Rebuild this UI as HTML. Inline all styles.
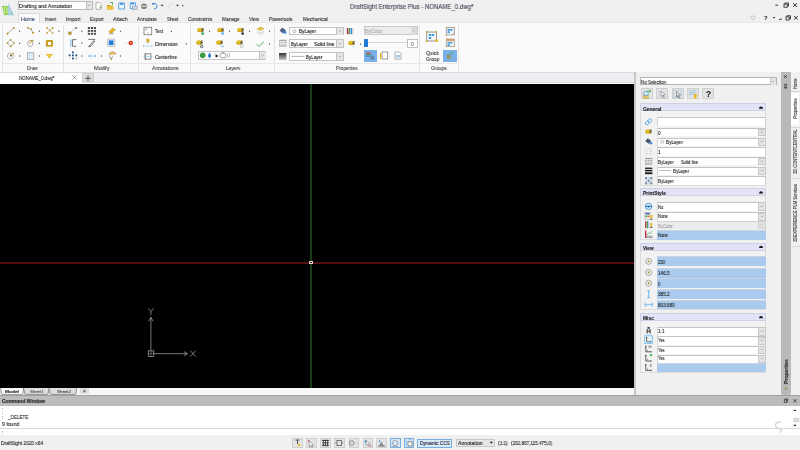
<!DOCTYPE html>
<html><head><meta charset="utf-8">
<style>
*{box-sizing:border-box;margin:0;padding:0}
html,body{width:800px;height:450px;overflow:hidden;background:#efefef;font-family:"Liberation Sans",sans-serif;color:#222}
.a{position:absolute}
.t{position:absolute;white-space:pre;line-height:1;font-size:5px;-webkit-text-stroke-width:0.1px;will-change:transform}
svg{position:absolute;overflow:visible}
</style></head><body>
<div id="root" class="a" style="left:0;top:0;width:800px;height:450px">
<div class="a" style="left:0px;top:0px;width:800px;height:23.5px;background:#f0f0f0;"></div>
<div class="a" style="left:0px;top:22.4px;width:800px;height:49.2px;background:#fafafa;border-top:1px solid #e8e8e8"></div>
<div class="a" style="left:0px;top:71.5px;width:800px;height:1.2px;background:#dadada;"></div>
<div class="a" style="left:0px;top:72.7px;width:634px;height:11.3px;background:#eeeef2;"></div>
<div class="a" style="left:0px;top:82px;width:634px;height:0.9px;background:#dcdcdc;"></div>
<div class="a" style="left:0px;top:82.9px;width:634px;height:1.1px;background:#ffffff;"></div>
<div class="a" style="left:0px;top:72.7px;width:82px;height:10.2px;background:#ffffff;"></div>
<div class="a" style="left:82.2px;top:72.6px;width:11.5px;height:9.8px;background:#dcdcdc;border:0.5px solid #cfcfcf;border-radius:1px"></div>
<div class="a" style="left:0px;top:84px;width:633.6px;height:304px;background:#000;"></div>
<div class="a" style="left:633.6px;top:72px;width:147.6px;height:323.5px;background:#f0f0f0;border-left:2.4px solid #c6c6c6"></div>
<div class="a" style="left:781.2px;top:72px;width:10.2px;height:322.6px;background:#b9b9b9;border-radius:0 0 2px 2px"></div>
<div class="a" style="left:791.4px;top:72px;width:8.6px;height:323.5px;background:#f0f0f0;"></div>
<div class="a" style="left:0px;top:388px;width:633.6px;height:7.5px;background:#f0f0f0;"></div>
<div class="a" style="left:0px;top:395.3px;width:800px;height:11px;background:#bcbcbc;border-top:0.9px solid #a0a0a0"></div>
<div class="a" style="left:0px;top:406.3px;width:800px;height:21.7px;background:#ffffff;"></div>
<div class="a" style="left:0px;top:428px;width:800px;height:1px;background:#d8d8d8;"></div>
<div class="a" style="left:0px;top:429px;width:800px;height:6.4px;background:#ffffff;"></div>
<div class="a" style="left:0px;top:435.4px;width:800px;height:14.6px;background:#f0f0f0;"></div>
<svg style="left:0px;top:0px" width="20" height="20">
 <polygon points="8.2,3.3 13.9,15.2 8.1,15.3" fill="#98c6d2"/>
 <path d="M9.2,9 Q11,9.6 9.8,11.8 Q8.8,13.6 10.6,14.2" fill="none" stroke="#d8f0f8" stroke-width="0.9"/>
 <polygon points="2,5.9 7.6,5.9 7.7,15.1 4.2,15.3" fill="#86cc3a"/>
 <path d="M4,7.6 H5.4 Q7,7.8 6.9,10.8 Q6.8,13.2 5.4,13.4 H4.8 Z" fill="none" stroke="#d8f0c0" stroke-width="0.9"/>
</svg>
<div class="a" style="left:18.2px;top:1.3px;width:74.6px;height:8.4px;background:#fff;border:0.6px solid #bcbcbc"></div>
<div class="a" style="left:86px;top:1.9px;width:6.2px;height:7.2px;background:#e6e6e6;border-left:0.6px solid #b8b8b8"></div>
<svg style="left:0px;top:0px" width="100" height="12"><polyline points="87.8,4.6 89.1,5.9 90.4,4.6" fill="none" stroke="#606060" stroke-width="0.5"/></svg>
<div class="t" style="left:19px;top:4px;font-size:5.6px;color:#1a1a1a;transform:scaleX(0.911);transform-origin:0 0;">Drafting and Annotation</div>
<svg style="left:0px;top:0px" width="200" height="14">
<path d="M96,2.6 H99.3 L101,4.3 V9.2 H96 Z" fill="#fff" stroke="#8a8a8a" stroke-width="0.6"/><path d="M99.6,7.3 h2.2 M100.7,6.2 v2.2" stroke="#58a040" stroke-width="0.6"/>
<path d="M107,5 H109.5 L110.3,5.8 H113 V9.4 H107 Z" fill="#d8a020"/><path d="M107,6.5 H113.5 V9.4 H107Z" fill="#f0c040"/><path d="M110,2.5 L112.5,2.5 L112.5,5" fill="none" stroke="#40a040" stroke-width="0.8"/>
<rect x="118.8" y="3" width="5.6" height="6" fill="#eef6fc" stroke="#3a8ee0" stroke-width="0.75"/><rect x="120" y="3" width="3.2" height="1.8" fill="#3a8ee0"/>
<rect x="130.2" y="2.8" width="5.2" height="5.6" fill="#eef6fc" stroke="#3a8ee0" stroke-width="0.75"/><rect x="131.2" y="2.8" width="2.8" height="1.6" fill="#3a8ee0"/><rect x="132.5" y="6" width="4.8" height="3.6" fill="#c8d8e8" stroke="#7090b0" stroke-width="0.5"/>
<ellipse cx="144" cy="6.2" rx="3" ry="2.8" fill="#808080"/><rect x="141.5" y="5.6" width="5" height="1.4" fill="#d0d0d0"/>
<path d="M153,4 A2.6,2.6 0 1 1 154,8.7" fill="none" stroke="#2a7ad0" stroke-width="0.9"/><path d="M151.8,2.8 L153,5.2 L154.5,3.4Z" fill="#2a7ad0"/>
<path d="M160.6,4.8 H163.6 L162.1,6.4Z" fill="#303030"/>
<path d="M173,4 A2.6,2.6 0 1 0 172,8.7" fill="none" stroke="#dcdcdc" stroke-width="0.9"/>
<path d="M176,4.8 H179 L177.5,6.4Z" fill="#404040"/>
<rect x="182" y="5" width="1.3" height="1.3" fill="#505050"/>
</svg>
<div class="t" style="left:349.8px;top:4px;font-size:6.6px;color:#3c4250;transform:scaleX(0.917);transform-origin:0 0;">DraftSight Enterprise Plus - NONAME_0.dwg*</div>
<svg style="left:0px;top:0px" width="800" height="24">
<rect x="775.3" y="4.7" width="2.7" height="0.9" fill="#202020"/>
<rect x="785" y="3" width="3.4" height="3" fill="none" stroke="#202020" stroke-width="0.8"/><rect x="784" y="4.1" width="3.2" height="3.1" fill="#efefef" stroke="#202020" stroke-width="0.8"/>
<path d="M793.2,3.2 L797,7 M797,3.2 L793.2,7" stroke="#202020" stroke-width="0.9"/>
<path d="M753,20 L751,17.6 A1.2,1.2 0 0 1 753,16.4 A1.2,1.2 0 0 1 755,17.6Z" fill="none" stroke="#b8b8b8" stroke-width="0.7"/>
<path d="M772.6,16.9 H775.4 L774,18.4Z" fill="#303030"/>
<rect x="779" y="18.8" width="3" height="0.9" fill="#303030"/>
<rect x="787" y="15.8" width="3.4" height="3" fill="none" stroke="#202020" stroke-width="0.8"/><rect x="786" y="16.9" width="3.2" height="3.1" fill="#efefef" stroke="#202020" stroke-width="0.8"/>
<path d="M794.1,16 L797.7,19.6 M797.7,16 L794.1,19.6" stroke="#202020" stroke-width="0.9"/>
</svg>
<div class="t" style="left:763.9px;top:16px;font-size:5.8px;color:#303030;font-weight:bold;">?</div>
<div class="a" style="left:17.5px;top:13.1px;width:22.3px;height:10.4px;background:#fafafa;border:0.6px solid #dadada;border-bottom:none;z-index:2"></div>
<div class="t" style="left:21.4px;top:17px;font-size:5.6px;color:#2e4670;transform:scaleX(0.937);transform-origin:0 0;z-index:3">Home</div>
<div class="t" style="left:45px;top:17px;font-size:5.6px;color:#2a2a30;transform:scaleX(0.800);transform-origin:0 0;">Insert</div>
<div class="t" style="left:66.2px;top:17px;font-size:5.6px;color:#2a2a30;transform:scaleX(0.907);transform-origin:0 0;">Import</div>
<div class="t" style="left:90px;top:17px;font-size:5.6px;color:#2a2a30;transform:scaleX(0.840);transform-origin:0 0;">Export</div>
<div class="t" style="left:113px;top:17px;font-size:5.6px;color:#2a2a30;transform:scaleX(0.920);transform-origin:0 0;">Attach</div>
<div class="t" style="left:137.2px;top:17px;font-size:5.6px;color:#2a2a30;transform:scaleX(0.888);transform-origin:0 0;">Annotate</div>
<div class="t" style="left:167px;top:17px;font-size:5.6px;color:#2a2a30;transform:scaleX(0.779);transform-origin:0 0;">Sheet</div>
<div class="t" style="left:188px;top:17px;font-size:5.6px;color:#2a2a30;transform:scaleX(0.862);transform-origin:0 0;">Constraints</div>
<div class="t" style="left:222px;top:17px;font-size:5.6px;color:#2a2a30;transform:scaleX(0.870);transform-origin:0 0;">Manage</div>
<div class="t" style="left:249px;top:17px;font-size:5.6px;color:#2a2a30;transform:scaleX(0.839);transform-origin:0 0;">View</div>
<div class="t" style="left:269px;top:17px;font-size:5.6px;color:#2a2a30;transform:scaleX(0.852);transform-origin:0 0;">Powertools</div>
<div class="t" style="left:302.8px;top:17px;font-size:5.6px;color:#2a2a30;transform:scaleX(0.876);transform-origin:0 0;">Mechanical</div>
<div class="a" style="left:1.5px;top:24.5px;width:0.7px;height:46.5px;background:#e2e2e2;"></div>
<div class="a" style="left:63.3px;top:24.5px;width:0.7px;height:46.5px;background:#e2e2e2;"></div>
<div class="a" style="left:138.2px;top:24.5px;width:0.7px;height:46.5px;background:#e2e2e2;"></div>
<div class="a" style="left:190px;top:24.5px;width:0.7px;height:46.5px;background:#e2e2e2;"></div>
<div class="a" style="left:273.5px;top:24.5px;width:0.7px;height:46.5px;background:#e2e2e2;"></div>
<div class="a" style="left:419.4px;top:24.5px;width:0.7px;height:46.5px;background:#e2e2e2;"></div>
<div class="a" style="left:458.2px;top:24.5px;width:0.7px;height:46.5px;background:#e2e2e2;"></div>
<div class="a" style="left:2px;top:63px;width:456.5px;height:0.7px;background:#e8e8e8;"></div>
<div class="t" style="left:27.25px;top:66px;font-size:5.6px;color:#444;transform:scaleX(0.811);transform-origin:0 0;">Draw</div>
<div class="t" style="left:94px;top:66px;font-size:5.6px;color:#444;transform:scaleX(0.934);transform-origin:0 0;">Modify</div>
<div class="t" style="left:151.9px;top:66px;font-size:5.6px;color:#444;transform:scaleX(0.896);transform-origin:0 0;">Annotations</div>
<div class="t" style="left:225.6px;top:66px;font-size:5.6px;color:#444;transform:scaleX(0.845);transform-origin:0 0;">Layers</div>
<div class="t" style="left:335.6px;top:66px;font-size:5.6px;color:#444;transform:scaleX(0.846);transform-origin:0 0;">Properties</div>
<div class="t" style="left:430.9px;top:66px;font-size:5.6px;color:#444;transform:scaleX(0.860);transform-origin:0 0;">Groups</div>
<svg style="left:0px;top:0px" width="460" height="64"><rect x="19.00" y="30.60" width="1.2" height="1.2" fill="#4a5a70"/><rect x="38.80" y="30.60" width="1.2" height="1.2" fill="#4a5a70"/><rect x="58.30" y="30.60" width="1.2" height="1.2" fill="#4a5a70"/><rect x="19.00" y="42.80" width="1.2" height="1.2" fill="#4a5a70"/><rect x="38.80" y="42.80" width="1.2" height="1.2" fill="#4a5a70"/><rect x="19.00" y="55.40" width="1.2" height="1.2" fill="#4a5a70"/><rect x="38.80" y="55.40" width="1.2" height="1.2" fill="#4a5a70"/><rect x="81.15" y="30.60" width="1.2" height="1.2" fill="#4a5a70"/><rect x="119.90" y="30.60" width="1.2" height="1.2" fill="#4a5a70"/><rect x="81.15" y="42.40" width="1.2" height="1.2" fill="#4a5a70"/><rect x="81.15" y="55.40" width="1.2" height="1.2" fill="#4a5a70"/><rect x="100.90" y="55.40" width="1.2" height="1.2" fill="#4a5a70"/><rect x="119.90" y="55.40" width="1.2" height="1.2" fill="#4a5a70"/><rect x="170.80" y="30.80" width="1.2" height="1.2" fill="#4a5a70"/><rect x="185.70" y="43.20" width="1.2" height="1.2" fill="#4a5a70"/><rect x="208.90" y="30.60" width="1.2" height="1.2" fill="#4a5a70"/><rect x="228.90" y="30.60" width="1.2" height="1.2" fill="#4a5a70"/><rect x="248.90" y="30.60" width="1.2" height="1.2" fill="#4a5a70"/><rect x="268.90" y="30.60" width="1.2" height="1.2" fill="#4a5a70"/><rect x="268.90" y="43.40" width="1.2" height="1.2" fill="#4a5a70"/><rect x="360.00" y="43.60" width="1.2" height="1.2" fill="#4a5a70"/></svg>
<svg style="left:0px;top:0px" width="64" height="64">
 <g fill="#b89a30">
 <line x1="7.5" y1="33.8" x2="13.8" y2="27.8" stroke="#909090" stroke-width="0.7"/>
 <circle cx="7.5" cy="33.6" r="1.1"/><circle cx="13.8" cy="28" r="1.1"/>
 <path d="M27.8,27.8 L31,29 L33,33" fill="none" stroke="#909090" stroke-width="0.7"/>
 <circle cx="27.8" cy="27.8" r="1"/><circle cx="31" cy="29.2" r="0.9"/><circle cx="33" cy="32.8" r="1.1"/>
 <path d="M46.5,27.8 L53,33 M53,27.8 L46.5,33" stroke="#c0b070" stroke-width="0.6" fill="none"/>
 <circle cx="47" cy="28" r="0.9"/><circle cx="52.6" cy="28" r="0.9"/><circle cx="47" cy="32.8" r="0.9"/><circle cx="52.6" cy="32.8" r="0.9"/><circle cx="49.8" cy="30.4" r="0.8"/>
 <path d="M7.3,43 L10.5,39.6 L14,43 L10.8,46.4Z" fill="none" stroke="#909090" stroke-width="0.6"/>
 <circle cx="7.5" cy="43" r="1"/><circle cx="10.5" cy="39.8" r="0.9"/><circle cx="13.8" cy="43" r="0.9"/><circle cx="10.8" cy="46.2" r="1"/>
 <ellipse cx="30.2" cy="43.6" rx="2.7" ry="3" fill="none" stroke="#808080" stroke-width="0.6"/>
 <circle cx="31.5" cy="41" r="0.9"/><circle cx="33" cy="40.5" r="0.8"/><circle cx="30" cy="43" r="0.8"/>
 <rect x="45.8" y="40" width="7.2" height="6.8" rx="1" fill="#c8a028"/>
 <rect x="48" y="42" width="3" height="3" fill="#fff"/>
 <circle cx="10.5" cy="56" r="3.1" fill="none" stroke="#888" stroke-width="0.6"/>
 <circle cx="11" cy="55.6" r="1.1" fill="#706020"/><circle cx="13" cy="53.6" r="0.8"/>
 <rect x="27.3" y="52.8" width="6.6" height="6.5" fill="#d6ecf4" stroke="#8a8a8a" stroke-width="0.6"/>
 <path d="M45.8,54 H53 L49.4,58.6Z" fill="#e0b020"/>
 <path d="M47,54.6 H51.8 L49.4,57.4Z" fill="#f4d040"/>
 </g></svg>
<svg style="left:0px;top:0px" width="140" height="64">
 <rect x="68.8" y="32" width="2.4" height="2.6" fill="#c8a028" stroke="#604010" stroke-width="0.3"/>
 <line x1="71.5" y1="31.5" x2="75" y2="28.5" stroke="#3a9ae0" stroke-width="0.7" stroke-dasharray="1,0.6"/>
 <rect x="75.2" y="27.2" width="2" height="1.8" fill="#808080"/>
 <g fill="#505050">
  <rect x="87.8" y="27" width="2.2" height="2"/><rect x="90.8" y="27" width="2.2" height="2"/><rect x="93.8" y="27" width="2.2" height="2"/>
  <rect x="87.8" y="29.9" width="2.2" height="2"/><rect x="90.8" y="29.9" width="2.2" height="2"/><rect x="93.8" y="29.9" width="2.2" height="2"/>
  <rect x="87.8" y="32.8" width="2.2" height="2"/><rect x="90.8" y="32.8" width="2.2" height="2"/><rect x="93.8" y="32.8" width="2.2" height="2"/>
 </g>
 <path d="M108.6,32 L112.5,28 L115.4,29.6 L111.5,33.5Z" fill="#e8b820" stroke="#a07810" stroke-width="0.4"/>
 <path d="M109,33.8 H114" stroke="#606060" stroke-width="0.5"/>
 <path d="M70,39.5 Q71,39.5 71,41 V45 Q71,46.5 70,46.5" fill="none" stroke="#3a9ae0" stroke-width="0.7"/>
 <path d="M72.5,39.6 H76.3 M72.5,39.6 V46.3 H76.3" fill="none" stroke="#404040" stroke-width="0.7"/>
 <path d="M88.2,39.4 H95 L89,46 M95,41 L90.5,46.5 M88.2,46.5 H91" fill="none" stroke="#404040" stroke-width="0.7"/>
 <rect x="107.3" y="39" width="7.6" height="7.4" rx="0.8" fill="#e8eef4" stroke="#909090" stroke-width="0.5"/>
 <rect x="108.8" y="40.4" width="4.6" height="4.6" fill="#1f7ad8"/>
 <circle cx="130.8" cy="43" r="2.3" fill="#e03020"/>
 <circle cx="130.8" cy="43" r="0.8" fill="#f8d0a0"/>
 <circle cx="126.4" cy="43" r="0.45" fill="#3a9ae0"/><circle cx="135.2" cy="43" r="0.45" fill="#3a9ae0"/>
 <g fill="#1f4f80">
  <rect x="72" y="51.5" width="1.8" height="1.8"/>
  <rect x="68.8" y="54.5" width="1.8" height="1.8"/><rect x="72" y="54.5" width="1.8" height="1.8"/><rect x="75.4" y="54.5" width="1.8" height="1.8"/>
  <rect x="72" y="57.6" width="1.8" height="1.8"/>
 </g>
 <circle cx="76.4" cy="58.5" r="0.9" fill="#b0b0b0"/>
 <circle cx="69.6" cy="58.5" r="0.3" fill="#333"/>
 <path d="M88.6,56 H92 M89.8,54.9 L88.6,56 L89.8,57.1 M96,56 H92.5 M94.8,54.9 L96,56 L94.8,57.1" fill="none" stroke="#3a9ae0" stroke-width="0.6"/>
 <path d="M108.8,55 Q110,51.5 113,51.8 Q116,52 115.8,54.5" fill="#e8c070" stroke="#906030" stroke-width="0.4"/>
 <path d="M109,55.5 L111.2,59.6 L112.5,56" fill="none" stroke="#505050" stroke-width="0.5"/>
 <circle cx="111.4" cy="59.3" r="0.8" fill="#b8a030"/></svg>
<svg style="left:0px;top:0px" width="200" height="64">
 <rect x="144" y="27.2" width="7.8" height="7.6" fill="#fafafa" stroke="#505050" stroke-width="0.6"/>
 <path d="M145.6,29 v1.5 M145.6,29 h2" stroke="#505050" stroke-width="0.4"/>
 <path d="M148,32 v2" stroke="#888" stroke-width="0.4"/>
 <rect x="146.6" y="39" width="2.6" height="3" rx="0.6" fill="#e8b820" stroke="#a08020" stroke-width="0.3"/>
 <path d="M147.9,42 v1.4" stroke="#505050" stroke-width="0.5"/>
 <path d="M143.5,46.2 H152 M143.5,45 v2.4 M152,45 v2.4" stroke="#3a9ae0" stroke-width="0.5" fill="none" stroke-dasharray="0.8,0.4"/>
 <path d="M145.2,53.4 V59.6" stroke="#303030" stroke-width="0.8" fill="none"/>
 <path d="M145.2,53.8 H151 V59.2 H145.2" stroke="#404040" stroke-width="0.6" fill="none"/>
 <path d="M143.4,56.5 H152.4" stroke="#7ac0e8" stroke-width="0.6" fill="none"/></svg>
<div class="t" style="left:154.8px;top:29px;font-size:5.6px;color:#222;transform:scaleX(0.779);transform-origin:0 0;">Text</div>
<div class="t" style="left:154.8px;top:42px;font-size:5.6px;color:#222;transform:scaleX(0.862);transform-origin:0 0;">Dimension</div>
<div class="t" style="left:154.8px;top:55px;font-size:5.6px;color:#222;transform:scaleX(0.862);transform-origin:0 0;">Centerline</div>
<svg style="left:0px;top:0px" width="280" height="64"><defs>
  <g id="lay">
   <ellipse cx="3.3" cy="2.4" rx="3.2" ry="2.2" fill="#e4bc28"/>
   <path d="M0.6,3.4 Q3,5.2 6,3.6" fill="none" stroke="#b08810" stroke-width="0.6"/>
   <path d="M6.6,0.6 L4.6,1.7 L6.8,2.4 L4.6,3.1 L6.6,4.2" fill="none" stroke="#3a3a3a" stroke-width="0.65"/>
  </g>
 </defs>
 <use href="#lay" x="197" y="27.5"/>
 <circle cx="202.6" cy="33.6" r="1.3" fill="#30a040"/>
 <use href="#lay" x="217" y="27.5"/>
 <circle cx="222.6" cy="33.6" r="1.3" fill="#3a9ae0"/><rect x="222.3" y="32.8" width="0.6" height="1.6" fill="#fff"/>
 <use href="#lay" x="237" y="27.5"/>
 <circle cx="242.6" cy="33.6" r="1.3" fill="#303030"/>
 <path d="M257,29 L260.5,27 L264,28.6 L260.5,30.6Z" fill="#e8c830" stroke="#907010" stroke-width="0.3"/>
 <path d="M257,31 L260.5,33 L264,31 M257,32.5 L260.5,34.5 L264,32.5" fill="none" stroke="#c0c0c0" stroke-width="0.6"/>
 <use href="#lay" x="196" y="40"/>
 <circle cx="201.6" cy="46.5" r="1.2" fill="#fff" stroke="#202020" stroke-width="0.7"/>
 <use href="#lay" x="216" y="40"/>
 <path d="M220.5,46.5 h3 M222.5,45.5 l1,1 l-1,1" stroke="#3a9ae0" stroke-width="0.5" fill="none"/>
 <use href="#lay" x="236" y="40"/>
 <rect x="240.5" y="44.6" width="2.6" height="3" fill="#e8e8e8" stroke="#a0a0a0" stroke-width="0.3"/>
 <path d="M256.6,44.2 L259,46.4 L263.8,41.8" fill="none" stroke="#40a850" stroke-width="0.9"/></svg>
<div class="a" style="left:198.2px;top:51.2px;width:68.3px;height:8.4px;background:#fff;border:0.6px solid #c4c4c4"></div>
<div class="a" style="left:259.2px;top:51.8px;width:6.7px;height:7.2px;background:#e6e6e6;border-left:0.6px solid #c0c0c0"></div>
<svg style="left:0px;top:0px" width="280" height="64">
 <polyline points="261.3,55 262.6,56.2 263.9,55" fill="none" stroke="#707070" stroke-width="0.5"/>
 <circle cx="202.7" cy="55.3" r="2.6" fill="#3aa040" stroke="#207020" stroke-width="0.4"/>
 <path d="M209.6,52.6 Q208,54.8 208.1,56.3 A1.5,1.5 0 0 0 211.1,56.3 Q211.2,54.8 209.6,52.6Z" fill="#2a7ad0"/>
 <circle cx="216.6" cy="56" r="1.2" fill="#202020"/><path d="M214.6,53.6 l0.8,0.8 M215.8,53.2 v0.8 M214.2,55 h0.8" stroke="#505050" stroke-width="0.4"/>
 <rect x="220.2" y="53.2" width="5.6" height="4.6" rx="1.6" fill="#fff" stroke="#404040" stroke-width="0.5"/>
 <path d="M222.4,53.2 v-0.6 h1.2 v0.6" fill="none" stroke="#404040" stroke-width="0.4"/>
 <ellipse cx="228.6" cy="55.4" rx="1.1" ry="1.9" fill="none" stroke="#909090" stroke-width="0.6"/>
</svg>
<svg style="left:0px;top:0px" width="420" height="64">
 <path d="M279.5,30.5 L282.5,27.5 L286,30.5 L283,33.5Z" fill="#506080"/>
 <circle cx="285" cy="32.4" r="1.4" fill="#3a8ae0"/>
 <g stroke="#404040" stroke-width="0.55">
  <path d="M279,40.3 H286.5"/><path d="M279,42.2 h1.5 M281.5,42.2 h1.5 M284,42.2 h2.5" /><path d="M279,44.1 h1 M280.8,44.1 h1 M282.6,44.1 h1 M284.4,44.1 h1 M286,44.1 h0.6"/><path d="M279,46 H286.5"/>
 </g>
 <defs><linearGradient id="lw" x1="0" y1="0" x2="0" y2="1"><stop offset="0" stop-color="#303030"/><stop offset="1" stop-color="#c8c8c8"/></linearGradient></defs>
 <rect x="279" y="53" width="7.3" height="7" fill="url(#lw)"/>
 <rect x="346.8" y="28" width="1.6" height="6.2" fill="#b03040"/><rect x="348.8" y="28" width="1.4" height="6.2" fill="#40a050"/><rect x="350.6" y="28" width="1.5" height="6.2" fill="#3a8ae0"/><rect x="352.4" y="28" width="1.2" height="6.2" fill="#d0d0d0"/>
 <use href="#lay" x="348" y="40.5"/>
 <path d="M352.5,46.2 l1,1" stroke="#3a9ae0" stroke-width="0.5"/></svg>
<div class="a" style="left:289.4px;top:26.9px;width:54.4px;height:8.6px;background:#fff;border:0.6px solid #c4c4c4"></div>
<div class="a" style="left:336.3px;top:27.5px;width:6.9px;height:7.4px;background:#e6e6e6;border-left:0.6px solid #c0c0c0"></div>
<div class="a" style="left:289.4px;top:39.4px;width:54.4px;height:8.6px;background:#fff;border:0.6px solid #c4c4c4"></div>
<div class="a" style="left:336.3px;top:40.0px;width:6.9px;height:7.4px;background:#e6e6e6;border-left:0.6px solid #c0c0c0"></div>
<div class="a" style="left:289.4px;top:52.2px;width:54.4px;height:8.6px;background:#fff;border:0.6px solid #c4c4c4"></div>
<div class="a" style="left:336.3px;top:52.800000000000004px;width:6.9px;height:7.4px;background:#e6e6e6;border-left:0.6px solid #c0c0c0"></div>
<svg style="left:0px;top:0px" width="420" height="64">
 <polyline points="338.5,30.6 339.8,31.8 341.1,30.6" fill="none" stroke="#707070" stroke-width="0.5"/>
 <polyline points="338.5,43.1 339.8,44.3 341.1,43.1" fill="none" stroke="#707070" stroke-width="0.5"/>
 <polyline points="338.5,55.9 339.8,57.1 341.1,55.9" fill="none" stroke="#707070" stroke-width="0.5"/>
 <circle cx="294.4" cy="31.2" r="1.5" fill="#fff" stroke="#505050" stroke-width="0.4"/>
 <line x1="291.2" y1="56.4" x2="304.4" y2="56.4" stroke="#404040" stroke-width="0.4"/></svg>
<div class="t" style="left:299px;top:29px;font-size:5.6px;color:#111;transform:scaleX(0.828);transform-origin:0 0;">ByLayer</div>
<div class="t" style="left:290.6px;top:42px;font-size:5.6px;color:#111;transform:scaleX(0.813);transform-origin:0 0;">ByLayer</div>
<div class="t" style="left:313.7px;top:42px;font-size:5.6px;color:#111;transform:scaleX(0.902);transform-origin:0 0;">Solid line</div>
<div class="t" style="left:306px;top:55px;font-size:5.6px;color:#111;transform:scaleX(0.793);transform-origin:0 0;">ByLayer</div>
<div class="a" style="left:363.9px;top:26.2px;width:53.7px;height:9.2px;background:#ececec;border:0.6px solid #c8c8c8"></div>
<div class="a" style="left:410.7px;top:26.8px;width:6.4px;height:8px;background:#dcdcdc;"></div>
<svg style="left:0px;top:0px" width="420" height="64"><polyline points="412.6,30.4 413.9,31.6 415.2,30.4" fill="none" stroke="#a0a0a0" stroke-width="0.5"/></svg>
<div class="t" style="left:364.9px;top:29px;font-size:5.6px;color:#a8a8a8;transform:scaleX(0.874);transform-origin:0 0;">ByColor</div>
<div class="a" style="left:368px;top:42.4px;width:39.5px;height:0.7px;background:#d4d4d4;"></div>
<div class="a" style="left:364px;top:38.8px;width:4px;height:8px;background:#1f7ad8;border-radius:0.5px"></div>
<div class="a" style="left:407.3px;top:38.6px;width:10.3px;height:9.6px;background:#fff;border:0.6px solid #c0c0c0"></div>
<div class="t" style="left:411px;top:42px;font-size:5.0px;color:#444;-webkit-text-stroke-width:0px;transform:scaleX(0.935);transform-origin:0 0;">0</div>
<div class="a" style="left:364px;top:50px;width:12.7px;height:12px;background:#79b0e8;"></div>
<svg style="left:0px;top:0px" width="420" height="64">
 <rect x="366" y="52.5" width="5" height="1.3" fill="#c05050"/><rect x="366" y="54" width="5" height="1.3" fill="#50a060"/><rect x="366" y="55.5" width="5" height="1.3" fill="#5080c0"/>
 <path d="M371,59.5 L372.5,55.5 L374,59.5 M371.6,58 h1.8" stroke="#303030" stroke-width="0.45" fill="none"/>
 <rect x="382" y="52" width="5.8" height="7" fill="#fff" stroke="#505050" stroke-width="0.55"/>
 <rect x="380" y="53" width="1.3" height="5.8" fill="#e8b820"/>
 <path d="M395,52 H399.5 L401,53.5 V59.2 H395Z" fill="#fff" stroke="#606060" stroke-width="0.5"/>
 <rect x="396" y="55" width="4" height="2.6" fill="#a8c8e0"/></svg>
<svg style="left:0px;top:0px" width="460" height="64">
 <rect x="426.8" y="32" width="9.5" height="9" fill="#f4f4f4" stroke="#606060" stroke-width="0.6"/>
 <circle cx="426.8" cy="32" r="0.9" fill="#c8a028"/><circle cx="436.3" cy="32" r="0.9" fill="#c8a028"/><circle cx="426.8" cy="41" r="0.9" fill="#c8a028"/>
 <rect x="428.8" y="34" width="2.4" height="2" fill="#3a9ae0"/><rect x="431.8" y="34" width="2.4" height="2" fill="#3a9ae0"/><rect x="428.8" y="37" width="2.4" height="2" fill="#3a9ae0"/>
 <circle cx="436.5" cy="40.5" r="1.6" fill="#e8b820"/>
 <rect x="446.2" y="27.4" width="8" height="7.6" fill="#f4f4f4" stroke="#606060" stroke-width="0.5"/>
 <circle cx="446.2" cy="27.4" r="0.7" fill="#c8a028"/><circle cx="454.2" cy="27.4" r="0.7" fill="#c8a028"/><circle cx="446.2" cy="35" r="0.7" fill="#c8a028"/>
 <rect x="447.6" y="29" width="2.2" height="1.8" fill="#3a9ae0"/><rect x="450.2" y="29" width="2.2" height="1.8" fill="#3a9ae0"/><rect x="447.6" y="31.3" width="2.2" height="1.8" fill="#3a9ae0"/>
 <path d="M452.6,33.2 l1.4,1.4 M454,33.2 l-1.4,1.4" stroke="#d04040" stroke-width="0.4"/>
 <rect x="446.2" y="39" width="8" height="7.6" fill="#f4f4f4" stroke="#606060" stroke-width="0.5"/>
 <rect x="446.4" y="39.2" width="7.6" height="1.6" fill="#e09040"/>
 <circle cx="446.2" cy="46.6" r="0.7" fill="#c8a028"/><circle cx="454.2" cy="46.6" r="0.7" fill="#c8a028"/>
 <rect x="447.6" y="41.8" width="2.2" height="1.8" fill="#3a9ae0"/><rect x="450.2" y="41.8" width="2.2" height="1.8" fill="#3a9ae0"/><rect x="447.6" y="44" width="2.2" height="1.8" fill="#3a9ae0"/></svg>
<div class="a" style="left:443px;top:50px;width:13.5px;height:12px;background:#79b0e8;"></div>
<svg style="left:0px;top:0px" width="460" height="64">
 <rect x="447" y="55" width="3.6" height="3.6" fill="#a0a060" stroke="#707040" stroke-width="0.3"/>
 <path d="M449.5,55 Q450,52.5 452.5,52.5" fill="none" stroke="#40a050" stroke-width="0.6"/>
 <path d="M451.8,51.6 L453.2,52.5 L451.8,53.4Z" fill="#40a050"/></svg>
<div class="t" style="left:425.8px;top:51px;font-size:5.6px;color:#333;transform:scaleX(0.894);transform-origin:0 0;">Quick</div>
<div class="t" style="left:425.6px;top:57px;font-size:5.6px;color:#333;transform:scaleX(0.848);transform-origin:0 0;">Group</div>
<div class="t" style="left:18.7px;top:76px;font-size:5.6px;color:#222;transform:scaleX(0.794);transform-origin:0 0;">NONAME_0.dwg*</div>
<svg style="left:0px;top:0px" width="100" height="90"><path d="M72.2,75.2 L76.6,79.6 M76.6,75.2 L72.2,79.6" stroke="#505050" stroke-width="0.5"/>
<path d="M88,75.4 V81.2 M85.1,78.3 H90.9" stroke="#404040" stroke-width="0.8"/></svg>
<div class="a" style="left:310px;top:84px;width:2px;height:304px;background:#173c17;"></div>
<div class="a" style="left:0px;top:262px;width:633.6px;height:2px;background:#520f0f;"></div>
<div class="a" style="left:308.9px;top:260.8px;width:4.3px;height:3.4px;background:#2a1a10;border:0.7px solid #e8d8d8;border-radius:0.6px"></div>
<svg style="left:0px;top:0px" width="800" height="450">
<g stroke="#c8c8c8" stroke-width="0.6" fill="none">
<path d="M150.9,317.3 V350.7"/>
<path d="M148.7,321.3 L150.9,317.3 L153.1,321.3"/>
<path d="M148.2,308.3 L150.9,311.6 L153.6,308.3 M150.9,311.6 V315.3"/>
<rect x="148.2" y="350.9" width="5.6" height="5.6"/><path d="M151,350.9 v5.6 M148.2,353.7 h5.6" stroke-width="0.4"/>
<path d="M153.8,353.7 H187.3"/>
<path d="M183.8,351.5 L187.3,353.7 L183.8,355.9"/>
<path d="M190.2,350.6 L195.8,356.6 M195.8,350.6 L190.2,356.6"/>
</g></svg>
<div class="a" style="left:640.2px;top:77.2px;width:136.5px;height:8.3px;background:#fff;border:0.6px solid #b4b4b4"></div>
<div class="a" style="left:769.8px;top:77.8px;width:6.4px;height:7.1px;background:#e6e6e6;border-left:0.6px solid #c8c8c8"></div>
<svg style="left:0px;top:0px" width="800" height="450"><polyline points="771.7,80.8 773,82 774.3,80.8" fill="none" stroke="#808080" stroke-width="0.5"/></svg>
<div class="t" style="left:640.9px;top:81px;font-size:4.7px;color:#222;transform:scaleX(0.946);transform-origin:0 0;">No Selection</div>
<div class="a" style="left:641px;top:88.2px;width:11.799999999999955px;height:11.3px;background:#e2e2e2;border:0.6px solid #cfcfcf"></div>
<div class="a" style="left:656.2px;top:88.2px;width:11.799999999999955px;height:11.3px;background:#e2e2e2;border:0.6px solid #cfcfcf"></div>
<div class="a" style="left:671.5px;top:88.2px;width:12.0px;height:11.3px;background:#e2e2e2;border:0.6px solid #cfcfcf"></div>
<div class="a" style="left:687px;top:88.2px;width:11.799999999999955px;height:11.3px;background:#e2e2e2;border:0.6px solid #cfcfcf"></div>
<div class="a" style="left:702.2px;top:88.2px;width:12.299999999999955px;height:11.3px;background:#e2e2e2;border:0.6px solid #cfcfcf"></div>
<svg style="left:0px;top:0px" width="800" height="450">
<rect x="643.2" y="95.2" width="5" height="3.2" fill="#e8c860" stroke="#c09830" stroke-width="0.4"/>
<circle cx="646" cy="93.6" r="2.3" fill="#d8ecf8" fill-opacity="0.5" stroke="#3a9ae0" stroke-width="0.7"/>
<path d="M646.5,91.6 Q648.5,90.4 650,91.2" fill="none" stroke="#40b050" stroke-width="0.8"/>
<path d="M649.4,89.6 L651.4,91.4 L648.8,92.4Z" fill="#40b050"/>
<path d="M659,90.5 v6 M658.2,91.5 h1.6" stroke="#a8c8e8" stroke-width="0.5"/>
<path d="M661,91 L665.2,94.6 L663.2,94.9 L664.3,97.3 L663.4,97.7 L662.3,95.3 L661,96.6Z" fill="#fff" stroke="#404040" stroke-width="0.45"/>
<rect x="673.6" y="90.4" width="7.6" height="7" fill="none" stroke="#5aa8e8" stroke-width="0.5" stroke-dasharray="0.9,0.7"/>
<path d="M676.5,91.6 L680.5,95 L678.6,95.3 L679.6,97.6 L678.8,98 L677.8,95.7 L676.5,97Z" fill="#e8e8e8" stroke="#303030" stroke-width="0.45"/>
<path d="M689,90.8 h2 M691.6,90.8 h4 M689,92.6 h2 M691.6,92.6 h4 M689,94.4 h2 M691.6,94.4 h3" stroke="#5aa8e8" stroke-width="0.55"/>
<path d="M694,94 h2.4 l0.8,1.4 l-0.8,1.4 v1.6 h-2.4z" fill="#e8b820"/>
</svg>
<div class="t" style="left:706.2px;top:90px;font-size:8.4px;color:#202020;font-weight:bold;">?</div>
<div class="a" style="left:640.4px;top:103.4px;width:125.3px;height:82.6px;background:#f2f2f2;border:0.6px solid #dcdcdc"></div>
<div class="a" style="left:640.4px;top:103.4px;width:125.3px;height:8.099999999999994px;background:#e3e3f8;border:0.6px solid #cfd0e4"></div>
<div class="t" style="left:643px;top:108px;font-size:4.7px;color:#1a1a1a;font-weight:bold;transform:scaleX(1.051);transform-origin:0 0;">General</div>
<svg style="left:0px;top:0px" width="800" height="450"><path d="M758.9,108.75 L759.6,107.15 Q761,105.85 762.4,107.15 L763.1,108.75Z" fill="#151515"/></svg>
<div class="a" style="left:657.2px;top:117.3px;width:108.5px;height:9.200000000000003px;background:#fff;border-top:0.8px solid #c4c4c4;border-left:0.6px solid #d4d4d4;border-right:0.7px solid #cfcfcf"></div>
<div class="a" style="left:657.2px;top:128.2px;width:108.5px;height:8.0px;background:#fff;border-top:0.8px solid #c4c4c4;border-left:0.6px solid #d4d4d4"></div>
<div class="a" style="left:758.4px;top:128.6px;width:7.3px;height:7.6px;background:#e4e4e4;border:0.6px solid #c8c8c8"></div>
<svg style="left:0px;top:0px" width="800" height="450"><polyline points="760.7,131.50 762,132.70 763.3,131.50" fill="none" stroke="#808080" stroke-width="0.5"/></svg>
<div class="t" style="left:658px;top:132px;font-size:4.7px;color:#222;">0</div>
<div class="a" style="left:657.2px;top:137.7px;width:108.5px;height:8.100000000000023px;background:#fff;border-top:0.8px solid #c4c4c4;border-left:0.6px solid #d4d4d4"></div>
<div class="a" style="left:758.4px;top:138.1px;width:7.3px;height:7.700000000000022px;background:#e4e4e4;border:0.6px solid #c8c8c8"></div>
<svg style="left:0px;top:0px" width="800" height="450"><polyline points="760.7,141.05 762,142.25 763.3,141.05" fill="none" stroke="#808080" stroke-width="0.5"/></svg>
<svg style="left:0px;top:0px" width="800" height="450"><circle cx="662.2" cy="141.8" r="1.5" fill="#fff" stroke="#606060" stroke-width="0.4"/></svg>
<div class="t" style="left:665.7px;top:141px;font-size:4.7px;color:#222;transform:scaleX(0.974);transform-origin:0 0;">ByLayer</div>
<div class="a" style="left:657.2px;top:147px;width:108.5px;height:9.199999999999989px;background:#fff;border-top:0.8px solid #c4c4c4;border-left:0.6px solid #d4d4d4;border-right:0.7px solid #cfcfcf"></div>
<div class="t" style="left:658px;top:151px;font-size:4.7px;color:#222;">1</div>
<div class="a" style="left:657.2px;top:157.4px;width:108.5px;height:8.0px;background:#fff;border-top:0.8px solid #c4c4c4;border-left:0.6px solid #d4d4d4"></div>
<div class="a" style="left:758.4px;top:157.8px;width:7.3px;height:7.6px;background:#e4e4e4;border:0.6px solid #c8c8c8"></div>
<svg style="left:0px;top:0px" width="800" height="450"><polyline points="760.7,160.70 762,161.90 763.3,160.70" fill="none" stroke="#808080" stroke-width="0.5"/></svg>
<div class="t" style="left:658px;top:161px;font-size:4.7px;color:#222;transform:scaleX(0.905);transform-origin:0 0;">ByLayer</div>
<div class="t" style="left:680.7px;top:161px;font-size:4.7px;color:#222;transform:scaleX(0.891);transform-origin:0 0;">Solid line</div>
<div class="a" style="left:657.2px;top:166.6px;width:108.5px;height:8.099999999999994px;background:#fff;border-top:0.8px solid #c4c4c4;border-left:0.6px solid #d4d4d4"></div>
<div class="a" style="left:758.4px;top:167.0px;width:7.3px;height:7.699999999999994px;background:#e4e4e4;border:0.6px solid #c8c8c8"></div>
<svg style="left:0px;top:0px" width="800" height="450"><polyline points="760.7,169.95 762,171.15 763.3,169.95" fill="none" stroke="#808080" stroke-width="0.5"/></svg>
<div class="a" style="left:658.8px;top:170.4px;width:12.6px;height:0.8px;background:#c0c0c0;"></div>
<div class="t" style="left:672.6px;top:170px;font-size:4.7px;color:#222;transform:scaleX(0.922);transform-origin:0 0;">ByLayer</div>
<div class="a" style="left:657.2px;top:175.8px;width:108.5px;height:9.199999999999989px;background:#fff;border-top:0.8px solid #c4c4c4;border-left:0.6px solid #d4d4d4;border-right:0.7px solid #cfcfcf"></div>
<div class="t" style="left:658px;top:180px;font-size:4.7px;color:#222;transform:scaleX(0.905);transform-origin:0 0;">ByLayer</div>
<div class="a" style="left:640.4px;top:188px;width:125.3px;height:52.30000000000001px;background:#f2f2f2;border:0.6px solid #dcdcdc"></div>
<div class="a" style="left:640.4px;top:188px;width:125.3px;height:8.300000000000011px;background:#e3e3f8;border:0.6px solid #cfd0e4"></div>
<div class="t" style="left:643px;top:192px;font-size:4.7px;color:#1a1a1a;font-weight:bold;transform:scaleX(1.048);transform-origin:0 0;">PrintStyle</div>
<svg style="left:0px;top:0px" width="800" height="450"><path d="M758.9,193.45 L759.6,191.85 Q761,190.55 762.4,191.85 L763.1,193.45Z" fill="#151515"/></svg>
<div class="a" style="left:657.2px;top:202px;width:108.5px;height:9px;background:#fff;border-top:0.8px solid #c4c4c4;border-left:0.6px solid #d4d4d4"></div>
<div class="a" style="left:758.4px;top:202.4px;width:7.3px;height:8.6px;background:#e4e4e4;border:0.6px solid #c8c8c8"></div>
<svg style="left:0px;top:0px" width="800" height="450"><polyline points="760.7,205.80 762,207.00 763.3,205.80" fill="none" stroke="#808080" stroke-width="0.5"/></svg>
<div class="t" style="left:658px;top:206px;font-size:4.7px;color:#222;transform:scaleX(0.866);transform-origin:0 0;">No</div>
<div class="a" style="left:657.2px;top:212.3px;width:108.5px;height:8.299999999999983px;background:#fff;border-top:0.8px solid #c4c4c4;border-left:0.6px solid #d4d4d4"></div>
<div class="a" style="left:758.4px;top:212.70000000000002px;width:7.3px;height:7.899999999999983px;background:#e4e4e4;border:0.6px solid #c8c8c8"></div>
<svg style="left:0px;top:0px" width="800" height="450"><polyline points="760.7,215.75 762,216.95 763.3,215.75" fill="none" stroke="#808080" stroke-width="0.5"/></svg>
<div class="t" style="left:658px;top:215px;font-size:4.7px;color:#222;transform:scaleX(0.872);transform-origin:0 0;">None</div>
<div class="a" style="left:657.2px;top:220.8px;width:108.5px;height:8.599999999999994px;background:#ececec;border-top:0.8px solid #d0d0d0"></div>
<div class="a" style="left:758.4px;top:221.20000000000002px;width:7.3px;height:8.199999999999994px;background:#e0e0e0;border:0.6px solid #d4d4d4"></div>
<svg style="left:0px;top:0px" width="800" height="450"><polyline points="760.7,224.40 762,225.60 763.3,224.40" fill="none" stroke="#b0b0b0" stroke-width="0.5"/></svg>
<div class="t" style="left:658px;top:225px;font-size:4.7px;color:#a0a0a0;transform:scaleX(0.885);transform-origin:0 0;">ByColor</div>
<div class="a" style="left:657.2px;top:229.7px;width:108.5px;height:10.0px;background:#aacbee;border-top:0.6px solid #c8d4e4"></div>
<div class="t" style="left:658px;top:234px;font-size:4.7px;color:#222;transform:scaleX(0.872);transform-origin:0 0;">None</div>
<div class="a" style="left:640.4px;top:242.5px;width:125.3px;height:67.5px;background:#f2f2f2;border:0.6px solid #dcdcdc"></div>
<div class="a" style="left:640.4px;top:242.5px;width:125.3px;height:8.300000000000011px;background:#e3e3f8;border:0.6px solid #cfd0e4"></div>
<div class="t" style="left:643px;top:247px;font-size:4.7px;color:#1a1a1a;font-weight:bold;">View</div>
<svg style="left:0px;top:0px" width="800" height="450"><path d="M758.9,247.95 L759.6,246.35 Q761,245.05 762.4,246.35 L763.1,247.95Z" fill="#151515"/></svg>
<div class="a" style="left:657.2px;top:256.3px;width:108.5px;height:10.0px;background:#aacbee;border-top:0.6px solid #c8d4e4"></div>
<div class="t" style="left:658px;top:261px;font-size:4.7px;color:#222;transform:scaleX(0.893);transform-origin:0 0;">230</div>
<div class="a" style="left:657.2px;top:267.5px;width:108.5px;height:10.0px;background:#aacbee;border-top:0.6px solid #c8d4e4"></div>
<div class="t" style="left:658px;top:272px;font-size:4.7px;color:#222;transform:scaleX(0.986);transform-origin:0 0;">146.5</div>
<div class="a" style="left:657.2px;top:278.3px;width:108.5px;height:10.0px;background:#aacbee;border-top:0.6px solid #c8d4e4"></div>
<div class="t" style="left:658px;top:283px;font-size:4.7px;color:#222;transform:scaleX(0.842);transform-origin:0 0;">0</div>
<div class="a" style="left:657.2px;top:289.2px;width:108.5px;height:10.0px;background:#aacbee;border-top:0.6px solid #c8d4e4"></div>
<div class="t" style="left:658px;top:293px;font-size:4.7px;color:#222;transform:scaleX(0.986);transform-origin:0 0;">385.2</div>
<div class="a" style="left:657.2px;top:300px;width:108.5px;height:9.199999999999989px;background:#aacbee;border-top:0.6px solid #c8d4e4"></div>
<div class="t" style="left:658px;top:304px;font-size:4.7px;color:#222;transform:scaleX(0.977);transform-origin:0 0;">803.689</div>
<div class="a" style="left:640.4px;top:313.1px;width:125.3px;height:59.89999999999998px;background:#f2f2f2;border:0.6px solid #dcdcdc"></div>
<div class="a" style="left:640.4px;top:313.1px;width:125.3px;height:7.5px;background:#e3e3f8;border:0.6px solid #cfd0e4"></div>
<div class="t" style="left:643px;top:317px;font-size:4.7px;color:#1a1a1a;font-weight:bold;transform:scaleX(1.053);transform-origin:0 0;">Misc</div>
<svg style="left:0px;top:0px" width="800" height="450"><path d="M758.9,318.15 L759.6,316.55 Q761,315.25 762.4,316.55 L763.1,318.15Z" fill="#151515"/></svg>
<div class="a" style="left:657.2px;top:326.8px;width:108.5px;height:8.899999999999977px;background:#fff;border-top:0.8px solid #c4c4c4;border-left:0.6px solid #d4d4d4"></div>
<div class="a" style="left:758.4px;top:327.2px;width:7.3px;height:8.499999999999977px;background:#e4e4e4;border:0.6px solid #c8c8c8"></div>
<svg style="left:0px;top:0px" width="800" height="450"><polyline points="760.7,330.55 762,331.75 763.3,330.55" fill="none" stroke="#808080" stroke-width="0.5"/></svg>
<div class="t" style="left:658px;top:330px;font-size:4.7px;color:#222;transform:scaleX(0.980);transform-origin:0 0;">1:1</div>
<div class="a" style="left:657.2px;top:336.4px;width:108.5px;height:8.400000000000034px;background:#fff;border-top:0.8px solid #c4c4c4;border-left:0.6px solid #d4d4d4"></div>
<div class="a" style="left:758.4px;top:336.79999999999995px;width:7.3px;height:8.000000000000034px;background:#e4e4e4;border:0.6px solid #c8c8c8"></div>
<svg style="left:0px;top:0px" width="800" height="450"><polyline points="760.7,339.90 762,341.10 763.3,339.90" fill="none" stroke="#808080" stroke-width="0.5"/></svg>
<div class="t" style="left:658px;top:339px;font-size:4.7px;color:#222;transform:scaleX(0.848);transform-origin:0 0;">Yes</div>
<div class="a" style="left:657.2px;top:345.5px;width:108.5px;height:8.300000000000011px;background:#fff;border-top:0.8px solid #c4c4c4;border-left:0.6px solid #d4d4d4"></div>
<div class="a" style="left:758.4px;top:345.9px;width:7.3px;height:7.900000000000011px;background:#e4e4e4;border:0.6px solid #c8c8c8"></div>
<svg style="left:0px;top:0px" width="800" height="450"><polyline points="760.7,348.95 762,350.15 763.3,348.95" fill="none" stroke="#808080" stroke-width="0.5"/></svg>
<div class="t" style="left:658px;top:349px;font-size:4.7px;color:#222;transform:scaleX(0.848);transform-origin:0 0;">Yes</div>
<div class="a" style="left:657.2px;top:354.8px;width:108.5px;height:7.800000000000011px;background:#fff;border-top:0.8px solid #c4c4c4;border-left:0.6px solid #d4d4d4"></div>
<div class="a" style="left:758.4px;top:355.2px;width:7.3px;height:7.400000000000011px;background:#e4e4e4;border:0.6px solid #c8c8c8"></div>
<svg style="left:0px;top:0px" width="800" height="450"><polyline points="760.7,358.00 762,359.20 763.3,358.00" fill="none" stroke="#808080" stroke-width="0.5"/></svg>
<div class="t" style="left:658px;top:357px;font-size:4.7px;color:#222;transform:scaleX(0.848);transform-origin:0 0;">Yes</div>
<div class="a" style="left:657.2px;top:362.9px;width:108.5px;height:9.300000000000011px;background:#aacbee;border-top:0.6px solid #c8d4e4"></div>
<svg style="left:0px;top:0px" width="800" height="450">
<g transform="translate(648.5,121.8) rotate(-40)"><rect x="-3.6" y="-1.5" width="3.8" height="3" rx="1.4" fill="none" stroke="#3aa0e8" stroke-width="0.8"/><rect x="-0.2" y="-1.5" width="3.8" height="3" rx="1.4" fill="none" stroke="#3aa0e8" stroke-width="0.8"/></g>
<use href="#lay" x="645" y="129"/>
<path d="M645.2,141 L647.8,138.2 L651.4,141 L648.6,143.8Z" fill="#485868"/><circle cx="651" cy="143.2" r="1.3" fill="#3a8ae0"/>
<g stroke="#b8b8b8" stroke-width="0.55"><path d="M645,148.8 h2 M648.5,148.8 h3.5 M645,151.2 h1 M647,151.2 h1 M649,151.2 h3 M645,153.6 h3 M649,153.6 h3"/></g>
<g stroke="#404040" stroke-width="0.55"><path d="M645,158.4 H652.4 M645,160.3 h1.8 M647.6,160.3 h1.8 M650.2,160.3 h2.2 M645,162.2 h1 M646.6,162.2 h1 M648.2,162.2 h1 M649.8,162.2 h1 M651.4,162.2 h1 M645,164.1 H652.4"/></g>
<rect x="645" y="167.6" width="7.4" height="1.3" fill="#202020"/><rect x="645" y="169.8" width="7.4" height="1.6" fill="#202020"/><rect x="645" y="172.3" width="7.4" height="1.9" fill="#202020"/>
<g fill="#7890a8"><rect x="645" y="177" width="2.2" height="2.2"/><rect x="650.2" y="177" width="2.2" height="2.2"/><rect x="647.6" y="179.6" width="2.2" height="2.2"/><rect x="645" y="182.2" width="2.2" height="2.2"/><rect x="650.2" y="182.2" width="2.2" height="2.2"/></g>
<g fill="#c8d8e8"><rect x="647.6" y="177" width="2.2" height="2.2"/><rect x="645" y="179.6" width="2.2" height="2.2"/><rect x="650.2" y="179.6" width="2.2" height="2.2"/><rect x="647.6" y="182.2" width="2.2" height="2.2"/></g>

<circle cx="648.6" cy="206.4" r="3.2" fill="#d8ecf8" stroke="#2a80c8" stroke-width="0.7"/><path d="M645,206.4 h7.2" stroke="#2a80c8" stroke-width="1"/><circle cx="648.6" cy="206.4" r="1" fill="#1a60a8"/>
<rect x="645" y="212.5" width="5" height="7" fill="#f0f0f0" stroke="#808080" stroke-width="0.4"/><rect x="645.4" y="213" width="4.2" height="1.4" fill="#3070b0"/><rect x="645.4" y="215.5" width="2" height="1.6" fill="#40a050"/><rect x="647.6" y="215.5" width="2" height="1.6" fill="#e07030"/><rect x="650.6" y="215" width="1.8" height="3.6" fill="#e8b820"/><rect x="650.6" y="218.8" width="1.8" height="1" fill="#404040"/>
<rect x="645" y="221.2" width="1.4" height="7" fill="#c04050"/><rect x="646.6" y="221.2" width="1.4" height="7" fill="#50a060"/><rect x="648.2" y="221.2" width="1.2" height="7" fill="#a0c0e0"/><rect x="650.4" y="223" width="1.8" height="3.6" fill="#e8b820"/><rect x="650.4" y="226.8" width="1.8" height="1.2" fill="#404040"/>
<rect x="645" y="230.6" width="1.4" height="7.4" fill="#c03040"/><path d="M646.6,237.6 H652.6 M646.6,236.2 H652.6" stroke="#404040" stroke-width="0.5"/><path d="M647,235 L649,232.6 L650.4,233.8 L652.4,231" fill="none" stroke="#40a050" stroke-width="0.6"/>

<g fill="none" stroke="#707070" stroke-width="0.55"><circle cx="648.6" cy="261.3" r="3"/><circle cx="648.6" cy="272.4" r="3"/><circle cx="648.6" cy="283.2" r="3"/></g>
<g fill="#b09a30"><circle cx="648.6" cy="261.3" r="1.1"/><circle cx="648.6" cy="272.4" r="1.1"/><circle cx="648.6" cy="283.2" r="1.1"/></g>
<path d="M647.2,290.8 h2.8 M647.2,297.6 h2.8 M648.6,290.8 v6.8" stroke="#3aa0e8" stroke-width="0.7"/>
<path d="M645,302.4 v4.4 M652.4,302.4 v4.4 M645.4,304.6 h6.6 M646.8,303.6 l-1.2,1 l1.2,1 M650.6,303.6 l1.2,1 l-1.2,1" fill="none" stroke="#3aa0e8" stroke-width="0.55"/>

<path d="M647.1,333.6 V329.4 Q648.6,327.4 650.1,329.4 V333.6 M647.1,331.2 H650.1 M647.4,327.6 H649.8" fill="none" stroke="#202020" stroke-width="0.9"/>
<rect x="644.6" y="335.8" width="8" height="7.6" fill="#e4f2fc" stroke="#4aa8e8" stroke-width="0.6"/>
<path d="M646.6,337.6 V341.8 H651" fill="none" stroke="#202020" stroke-width="0.6"/><circle cx="646.6" cy="337.4" r="0.6" fill="#202020"/><path d="M650.4,341 L651.4,341.8 L650.4,342.6" fill="none" stroke="#202020" stroke-width="0.5"/>
<path d="M645.8,346.4 V351.8 H651" fill="none" stroke="#202020" stroke-width="0.7"/><circle cx="645.8" cy="346.2" r="0.6" fill="#202020"/><circle cx="651.2" cy="351.8" r="0.6" fill="#202020"/><circle cx="647.4" cy="350.4" r="0.45" fill="#202020"/>
<path d="M648.6,346 h1.2 M650.4,346 h1.2 M648.6,347.2 h1.2 M650.4,347.2 h1.2" stroke="#303030" stroke-width="0.6"/>
<path d="M645.8,355.6 V361 H651" fill="none" stroke="#202020" stroke-width="0.7"/><circle cx="645.8" cy="355.4" r="0.6" fill="#202020"/><circle cx="651.2" cy="361" r="0.6" fill="#202020"/><circle cx="647.4" cy="359.6" r="0.45" fill="#202020"/>
<circle cx="650.9" cy="355.2" r="1.1" fill="#30b040"/>
<path d="M645.8,364.8 V370.4 H651" fill="none" stroke="#202020" stroke-width="0.7"/><circle cx="645.8" cy="364.6" r="0.6" fill="#202020"/><circle cx="651.2" cy="370.4" r="0.6" fill="#202020"/><circle cx="647.4" cy="369" r="0.45" fill="#202020"/>
<path d="M649.8,364.4 h1.4 v2.2 h-1.4 M649.8,365.5 h1.4" fill="none" stroke="#505050" stroke-width="0.45"/>
</svg>
<svg style="left:0px;top:0px" width="800" height="450">
<path d="M784,75.2 L786.8,78 M786.8,75.2 L784,78" stroke="#202020" stroke-width="0.7"/>
<path d="M784.2,84.4 h2.8 M784.9,84.4 v3.4 M786.3,84.4 v3.4 M784,87.8 h3.2 M785.6,87.8 v1.2" stroke="#202020" stroke-width="0.6"/>
<rect x="784.8" y="387.6" width="1.1" height="1.1" fill="#e07030"/><rect x="786.1" y="387.6" width="1.1" height="1.1" fill="#40a050"/><rect x="784.8" y="388.9" width="1.1" height="1.1" fill="#3a8ae0"/><rect x="786.1" y="388.9" width="1.1" height="1.1" fill="#e8b820"/>
</svg>
<div class="a" style="left:791.4px;top:91px;width:8.6px;height:0.6px;background:#d8d8d8;"></div>
<div class="a" style="left:791.4px;top:93.3px;width:7.8px;height:31.4px;background:#ffffff;"></div>
<div class="a" style="left:791.4px;top:127px;width:8.6px;height:0.6px;background:#d8d8d8;"></div>
<div class="a" style="left:791.4px;top:177.6px;width:8.6px;height:0.6px;background:#d8d8d8;"></div>
<div class="a" style="left:791.4px;top:245.5px;width:8.6px;height:0.6px;background:#d8d8d8;"></div>
<div class="t" style="left:792.80px;top:88.70px;font-size:5.0px;color:#333;transform-origin:0 0;transform:rotate(-90deg) scaleX(0.802)">Home</div>
<div class="t" style="left:792.80px;top:119.30px;font-size:5.0px;color:#333;transform-origin:0 0;transform:rotate(-90deg) scaleX(0.904)">Properties</div>
<div class="t" style="left:794.46px;top:174.00px;font-size:4.6px;color:#333;transform-origin:0 0;transform:rotate(-90deg) scaleX(0.879)">3D CONTENTCENTRAL</div>
<div class="t" style="left:794.46px;top:241.70px;font-size:4.6px;color:#333;transform-origin:0 0;transform:rotate(-90deg) scaleX(0.890)">3DEXPERIENCE PLM Services</div>
<div class="t" style="left:784.76px;top:383.50px;font-size:4.6px;color:#202020;font-weight:bold;transform-origin:0 0;transform:rotate(-90deg) scaleX(1.090)">Properties</div>
<div class="a" style="left:0px;top:388px;width:77px;height:6.6px;background:#e6e6e6;"></div>
<div class="a" style="left:77px;top:388px;width:556.6px;height:7.4px;background:#f8f8f8;"></div>
<svg style="left:0px;top:0px" width="800" height="450">
<path d="M0.5,388.2 L1.6,393.8 Q1.9,394.4 2.6,394.4 H21.6 Q22.3,394.4 22.6,393.8 L23.6,388.2" fill="#ffffff" stroke="#404040" stroke-width="0.5"/>
<path d="M23.6,388.2 L24.8,393.8 Q25.1,394.4 25.8,394.4 H47 Q47.7,394.4 48,393.8 L49.2,388.2" fill="#dedede" stroke="#404040" stroke-width="0.5"/>
<path d="M49.2,388.2 L50.4,393.8 Q50.7,394.4 51.4,394.4 H74.6 Q75.3,394.4 75.6,393.8 L76.8,388.2" fill="#dedede" stroke="#404040" stroke-width="0.5"/>
<rect x="80" y="388.7" width="8.7" height="4.8" fill="#e0e0e0" stroke="#c8c8c8" stroke-width="0.4"/>
<path d="M84.35,389.5 v3.2 M82.75,391.1 h3.2" stroke="#404040" stroke-width="0.6"/>
</svg>
<div class="t" style="left:5px;top:390px;font-size:4.2px;color:#202020;font-weight:bold;transform:scaleX(1.154);transform-origin:0 0;">Model</div>
<div class="t" style="left:30px;top:390px;font-size:4.2px;color:#505050;transform:scaleX(1.022);transform-origin:0 0;">Sheet1</div>
<div class="t" style="left:56.9px;top:390px;font-size:4.2px;color:#404040;transform:scaleX(1.052);transform-origin:0 0;">Sheet2</div>
<div class="t" style="left:1.9px;top:399px;font-size:5.0px;color:#1a1a1a;font-weight:bold;transform:scaleX(0.957);transform-origin:0 0;">Command Window</div>
<svg style="left:0px;top:0px" width="800" height="450">
<rect x="785" y="399" width="2.8" height="2.6" fill="none" stroke="#202020" stroke-width="0.6"/><rect x="784.2" y="399.9" width="2.6" height="2.6" fill="#bababa" stroke="#202020" stroke-width="0.6"/>
<path d="M793.4,399.2 L796.6,402.4 M796.6,399.2 L793.4,402.4" stroke="#202020" stroke-width="0.7"/>
<path d="M794.9,409.4 L796.6,411 H793.2Z" fill="#202020"/>
<rect x="793.4" y="417.8" width="6" height="4.4" fill="#d8d8d8"/>
<path d="M793.2,424.8 H796.6 L794.9,426.4Z" fill="#202020"/>
<path d="M781,421.5 Q775,422 775.5,425.8 Q776.5,428.6 781,429 Q783,430.6 779,432.6" fill="none" stroke="#d8d8d8" stroke-width="1.4"/>
</svg>
<svg style="left:0px;top:0px" width="800" height="450">
<g fill="#404040">
<rect x="2.2" y="408.2" width="0.6" height="0.6"/>
<rect x="2.2" y="411.4" width="0.6" height="0.6"/><rect x="2.2" y="413.2" width="0.6" height="0.6"/>
<rect x="2.2" y="416.2" width="0.6" height="0.6"/><rect x="2.2" y="418" width="0.6" height="0.6"/>
<rect x="2.2" y="431" width="0.6" height="0.6"/><rect x="2.2" y="432.8" width="0.6" height="0.6"/>
</g></svg>
<div class="t" style="left:8px;top:415px;font-size:5.4px;color:#303030;transform:scaleX(0.858);transform-origin:0 0;">_DELETE</div>
<div class="t" style="left:2px;top:422px;font-size:5.6px;color:#222;transform:scaleX(0.921);transform-origin:0 0;">9 found</div>
<div class="t" style="left:1px;top:441px;font-size:5.0px;color:#222;transform:scaleX(0.950);transform-origin:0 0;">DraftSight 2020 x64</div>
<div class="a" style="left:292.2px;top:438px;width:10.600000000000023px;height:9.8px;background:#e4e4e4;border:0.6px solid #cfcfcf"></div>
<div class="a" style="left:306.2px;top:438px;width:10.600000000000023px;height:9.8px;background:#e4e4e4;border:0.6px solid #cfcfcf"></div>
<div class="a" style="left:320.2px;top:438px;width:10.600000000000023px;height:9.8px;background:#e4e4e4;border:0.6px solid #cfcfcf"></div>
<div class="a" style="left:334.2px;top:438px;width:10.600000000000023px;height:9.8px;background:#e4e4e4;border:0.6px solid #cfcfcf"></div>
<div class="a" style="left:348.5px;top:438px;width:10.300000000000011px;height:9.8px;background:#e4e4e4;border:0.6px solid #cfcfcf"></div>
<div class="a" style="left:362.5px;top:438px;width:10.5px;height:9.8px;background:#e4e4e4;border:0.6px solid #cfcfcf"></div>
<div class="a" style="left:376px;top:438px;width:10.800000000000011px;height:9.8px;background:#e4e4e4;border:0.6px solid #cfcfcf"></div>
<div class="a" style="left:390px;top:438px;width:10.5px;height:9.8px;background:#d6e8f8;border:0.6px solid #78aee0"></div>
<div class="a" style="left:403.5px;top:438px;width:10.5px;height:9.8px;background:#d6e8f8;border:0.6px solid #78aee0"></div>
<svg style="left:0px;top:0px" width="800" height="450">
<path d="M295.5,440 h4 M297.5,440 v4" stroke="#404040" stroke-width="0.9"/><ellipse cx="299" cy="445" rx="1.6" ry="1" fill="#e8b820"/>
<circle cx="308.6" cy="440.8" r="0.8" fill="#e03050"/><path d="M309,441 L313.6,445 L311.6,445.2 L312.6,447 L311.8,447.3 L310.8,445.6 L309.4,446.7Z" fill="#fff" stroke="#404040" stroke-width="0.45"/>
<g stroke="#202020" stroke-width="0.8"><path d="M322,440.5 h7 M322,442.9 h7 M322,445.3 h7"/></g><g stroke="#303030" stroke-width="0.7"><path d="M323.5,439.6 v6.8 M325.5,439.6 v6.8 M327.5,439.6 v6.8"/></g>
<path d="M337,440.5 H341.6 V445.5 H337" fill="none" stroke="#303030" stroke-width="0.6"/><path d="M336.5,443 h-1.2 M341.6,443 h1.6 M337,440 v6" stroke="#303030" stroke-width="0.6"/>
<circle cx="351.6" cy="443" r="2.4" fill="none" stroke="#707070" stroke-width="0.7"/><circle cx="351.6" cy="443" r="0.7" fill="#8ac8e8"/><path d="M353,443 h4.4" stroke="#8ac8e8" stroke-width="0.6" stroke-dasharray="0.8,0.5"/>
<rect x="364.8" y="440" width="1" height="3" fill="#3a9ae0"/><path d="M366.4,440.4 L370.2,443.8 L368.4,444 L369.2,445.8 L368.5,446.1 L367.7,444.3 L366.4,445.4Z" fill="#fff" stroke="#404040" stroke-width="0.4"/><circle cx="370.6" cy="446" r="0.7" fill="#e03030"/>
<rect x="379" y="440.2" width="1" height="2" fill="#3a9ae0"/><path d="M378.8,446 L381.4,441.6 L384,446Z" fill="#909090"/><rect x="378" y="445.6" width="7" height="0.9" fill="#707070"/>
<circle cx="395.2" cy="443" r="2.6" fill="none" stroke="#303030" stroke-width="0.6" stroke-dasharray="0.9,0.5"/><path d="M392,446.4 h6.4" stroke="#303030" stroke-width="0.5" stroke-dasharray="0.6,0.5"/>
<rect x="408" y="441.8" width="4" height="4.2" fill="#fff" stroke="#404040" stroke-width="0.6"/><path d="M406.2,440.2 v5.6 M408.8,439.6 h2.4" stroke="#3a9ae0" stroke-width="0.5"/>
</svg>
<div class="a" style="left:417px;top:438.6px;width:35px;height:9px;background:#d8eafa;border:0.6px solid #78aee0"></div>
<div class="t" style="left:419.6px;top:441px;font-size:5.0px;color:#1a1a2a;transform:scaleX(0.949);transform-origin:0 0;">Dynamic CCS</div>
<div class="a" style="left:456.2px;top:439px;width:39.3px;height:8.2px;background:#e6e6e6;border:0.6px solid #c8c8c8"></div>
<div class="t" style="left:457.8px;top:441px;font-size:5.0px;color:#222;transform:scaleX(1.029);transform-origin:0 0;">Annotation</div>
<svg style="left:0px;top:0px" width="800" height="450"><path d="M489.5,441.8 H493 L491.25,443.7Z" fill="#202020"/></svg>
<div class="t" style="left:498.2px;top:441px;font-size:5.0px;color:#222;transform:scaleX(0.934);transform-origin:0 0;">(1:1)</div>
<div class="t" style="left:510.5px;top:441px;font-size:5.0px;color:#222;transform:scaleX(0.918);transform-origin:0 0;">(202.867,115.475,0)</div>
</div></body></html>
